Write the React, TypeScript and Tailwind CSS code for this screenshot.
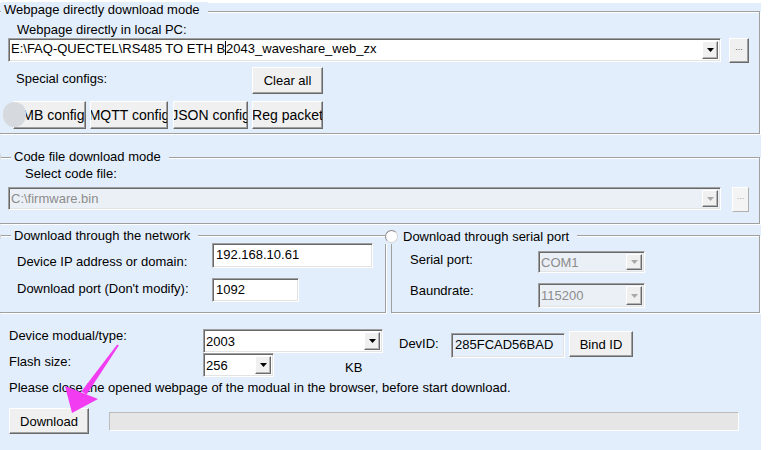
import type { ReactNode } from 'react';

function Tri({ dim }: { dim?: boolean }) {
  return (
    <svg width="7" height="4" viewBox="0 0 7 4">
      <path d="M0 0h7L3.5 4z" fill={dim ? '#a8a8a8' : '#000'} />
    </svg>
  );
}

function Combo({ className, dim, top, children }: { className: string; dim?: boolean; top?: boolean; children: ReactNode }) {
  return (
    <div
      className={`flex border border-t-[#a0a0a0] border-l-[#a0a0a0] border-r-white border-b-white shadow-[inset_1px_1px_0_#696969,inset_-1px_-1px_0_#e3e3e3] ${
        dim ? 'bg-[#ebf0f6] text-[#8c8c8c]' : 'bg-white'
      } ${className}`}
    >
      <div className={`flex-1 flex pl-[2px] whitespace-nowrap overflow-hidden ${top ? 'items-start pt-[2px]' : 'items-center'}`}>
        {children}
      </div>
      <div className="w-[16px] my-[2px] mr-[2px] flex items-center justify-center bg-[#f0f0f0] border border-t-white border-l-white border-r-[#6a6a6a] border-b-[#6a6a6a] shadow-[inset_-1px_-1px_0_#b4b4b4]">
        <Tri dim={dim} />
      </div>
    </div>
  );
}

function TextBox({ className, children }: { className: string; children: ReactNode }) {
  return (
    <div
      className={`flex items-center pl-[3px] pb-[2px] border border-t-[#a0a0a0] border-l-[#a0a0a0] border-r-white border-b-white shadow-[inset_1px_1px_0_#696969,inset_-1px_-1px_0_#e3e3e3] ${className}`}
    >
      {children}
    </div>
  );
}

function Btn({ className, children }: { className: string; children: ReactNode }) {
  return (
    <div
      className={`flex items-center justify-center overflow-hidden whitespace-nowrap bg-[#f0f0f0] border border-t-white border-l-white border-r-[#6a6a6a] border-b-[#6a6a6a] shadow-[inset_-1px_-1px_0_#a0a0a0] ${className}`}
    >
      {children}
    </div>
  );
}

function Radio({ className }: { className: string }) {
  return <div className={`w-[13px] h-[13px] rounded-full bg-white border border-t-[#8a8a8a] border-l-[#8a8a8a] border-r-[#d4d4d4] border-b-[#d4d4d4] ${className}`} />;
}

const groupCls = 'relative border border-[#a0a0a0] shadow-[1px_1px_0_#fff,inset_0_1px_0_#fff]';

export default function App() {
  return (
    <div className="relative w-[777px] h-[450px] overflow-hidden bg-white font-['Liberation_Sans',Arial,sans-serif] text-[13px] leading-[15px] text-black">
      <div className="w-[761px] h-[447px] mt-[3px] bg-[#e3eefc] flex flex-col">
        {/* Webpage directly download mode */}
        <div className={`${groupCls} border-l-0 mt-[8px] w-[760px] h-[123px] flex flex-col`}>
          <span className="absolute left-[1px] top-[-10px] bg-[#e3eefc] pl-[3px] pr-[8px]">Webpage directly download mode</span>
          <div className="mt-[10px] h-[15px] pl-[17px]">Webpage directly in local PC:</div>
          <div className="mt-[1px] flex h-[24px]">
            <Combo className="ml-[8px] w-[713px] h-[24px]" top>
              E:\FAQ-QUECTEL\RS485 TO ETH B
              <span className="inline-block w-[1px] h-[14px] bg-black" />
              2043_waveshare_web_zx
            </Combo>
            <Btn className="ml-[8px] w-[20px] h-[25px] text-[9px] text-[#555] items-end pb-[7px]">...</Btn>
          </div>
          <div className="mt-[5px] flex h-[27px]">
            <div className="w-[252px] pl-[16px] pt-[4px]">Special configs:</div>
            <Btn className="w-[71px] h-[27px]">Clear all</Btn>
          </div>
          <div className="mt-[7px] flex h-[28px] text-[14px]">
            <Btn className="ml-[13px] w-[73px] h-[28px]">LMB config</Btn>
            <Btn className="ml-[4px] w-[78px] h-[28px]">MQTT config</Btn>
            <Btn className="ml-[5px] w-[75px] h-[28px]">JSON config</Btn>
            <Btn className="ml-[4px] w-[71px] h-[28px]">Reg packet</Btn>
          </div>
          <div className="absolute left-[3px] top-[90px] w-[23px] h-[25px] rounded-full bg-[#d6dade]" />
        </div>

        {/* Code file download mode */}
        <div className={`${groupCls} border-l-0 mt-[23px] w-[760px] h-[67px] flex flex-col`}>
          <Radio className="absolute left-[-12px] top-[-8px]" />
          <span className="absolute left-[11px] top-[-9px] bg-[#e3eefc] pl-[3px] pr-[8px]">Code file download mode</span>
          <div className="mt-[8px] h-[15px] pl-[25px]">Select code file:</div>
          <div className="mt-[6px] flex h-[23px]">
            <Combo className="ml-[8px] w-[713px] h-[23px]" dim>
              C:\firmware.bin
            </Combo>
            <Btn className="ml-[11px] w-[17px] h-[25px] text-[9px] text-[#aaa] items-end pb-[7px] bg-[#f4f4f4] border-r-[#b0b0b0] border-b-[#b0b0b0] shadow-none">...</Btn>
          </div>
        </div>

        {/* Network / serial port */}
        <div className="mt-[11px] flex h-[78px]">
          <div className={`${groupCls} border-l-0 w-[386px] h-full flex flex-col`}>
            <Radio className="absolute left-[-12px] top-[-6px]" />
            <span className="absolute left-[11px] top-[-8px] bg-[#e3eefc] pl-[3px] pr-[8px]">Download through the network</span>
            <div className="mt-[7px] flex h-[25px]">
              <div className="w-[212px] pl-[17px] pt-[11px]">Device IP address or domain:</div>
              <TextBox className="w-[161px] h-[25px] bg-white">192.168.10.61</TextBox>
            </div>
            <div className="mt-[10px] flex h-[24px]">
              <div className="w-[212px] pl-[17px] pt-[3px]">Download port (Don't modify):</div>
              <TextBox className="w-[87px] h-[24px] bg-white">1092</TextBox>
            </div>
          </div>
          <div className={`${groupCls} ml-[5px] w-[369px] h-full flex flex-col`}>
            <div className="absolute left-[-7px] top-[-7px] flex items-center gap-[5px] bg-[#e3eefc] pr-[8px]">
              <Radio className="" />
              <span>Download through serial port</span>
            </div>
            <div className="mt-[15px] flex h-[22px]">
              <div className="w-[146px] pl-[18px] pt-[1px]">Serial port:</div>
              <Combo className="w-[107px] h-[22px]" dim>
                COM1
              </Combo>
            </div>
            <div className="mt-[10px] flex h-[25px]">
              <div className="w-[146px] pl-[18px]">Baundrate:</div>
              <Combo className="w-[107px] h-[25px]" dim>
                115200
              </Combo>
            </div>
          </div>
        </div>

        {/* Device settings */}
        <div className="mt-[15px] flex items-start h-[25px]">
          <div className="w-[203px] pl-[9px]">Device modual/type:</div>
          <Combo className="mt-[1px] w-[180px] h-[24px]">2003</Combo>
          <div className="ml-[16px] mt-[8px] w-[52px]">DevID:</div>
          <TextBox className="mt-[5px] w-[114px] h-[25px] bg-[#e6f0fc]">285FCAD56BAD</TextBox>
          <Btn className="ml-[4px] mt-[3px] w-[64px] h-[26px]">Bind ID</Btn>
        </div>
        <div className="flex items-start h-[24px]">
          <div className="w-[203px] pl-[9px] mt-[1px]">Flash size:</div>
          <Combo className="w-[71px] h-[24px]">256</Combo>
          <div className="ml-[71px] mt-[7px]">KB</div>
        </div>
        <div className="mt-[3px] h-[15px] pl-[9px]">
          Please close the opened webpage of the modual in the browser, before start download.
        </div>
        <div className="mt-[13px] flex items-start">
          <Btn className="ml-[9px] w-[80px] h-[26px]">Download</Btn>
          <div className="ml-[20px] mt-[4px] w-[630px] h-[19px] bg-[#e6e6e6] border border-t-[#bcbcbc] border-l-[#bcbcbc] border-r-white border-b-white" />
        </div>
      </div>

      {/* pointer arrow annotation */}
      <svg className="absolute inset-0 pointer-events-none" width="777" height="450" viewBox="0 0 777 450">
        <polygon points="118.8,345.6 117.2,344.4 81.5,391.3 86.5,394.7" fill="#f23cf2" />
        <polygon points="65,386 98,399 72,413" fill="#f23cf2" />
      </svg>
    </div>
  );
}
